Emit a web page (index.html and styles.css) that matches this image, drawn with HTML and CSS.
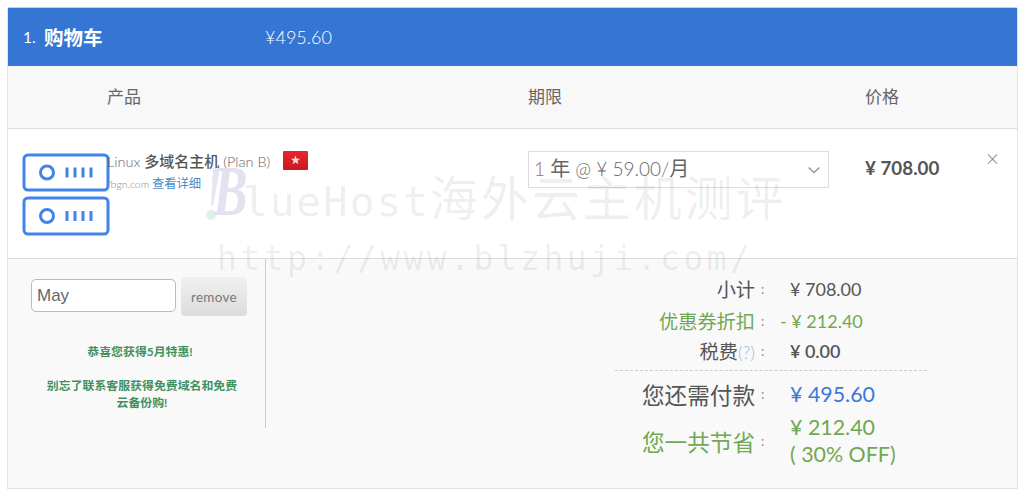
FILE: index.html
```html
<!DOCTYPE html>
<html lang="zh">
<head>
<meta charset="utf-8">
<title>购物车</title>
<link rel="stylesheet" href="styles.css">
</head>
<body>
<section class="panel">
  <header class="bar">
    <span class="step">1.</span>
    <strong class="bar-title">购物车</strong>
    <span class="bar-price">¥495.60</span>
  </header>
  <div class="cols head">
    <div class="head-product">产品</div>
    <div class="head-term">期限</div>
    <div class="head-price">价格</div>
  </div>
  <div class="cols row">
    <div class="icon-cell">
      <svg class="server" width="88" height="83" viewBox="0 0 88 83" fill="none" stroke="#4285e8" stroke-width="3">
        <rect x="2" y="2" width="84" height="35" rx="4"/>
        <circle cx="25" cy="19.500" r="6.500"/>
        <path d="M45 14.500v10M53 14.500v10M61 14.500v10M69 14.500v10"/>
        <rect x="2" y="45" width="84" height="36" rx="4"/>
        <circle cx="25" cy="63" r="6.500"/>
        <path d="M45 58v10M53 58v10M61 58v10M69 58v10"/>
      </svg>
    </div>
    <div class="info">
      <div class="name"><span>Linux <b>多域名主机</b> (Plan B)</span>
        <svg class="flag" width="25" height="19" viewBox="0 0 25 19"><defs><linearGradient id="flagfill" x1="0" y1="0" x2="0" y2="1"><stop offset="0" stop-color="#e8262c"/><stop offset="1" stop-color="#c9181f"/></linearGradient></defs><rect width="25" height="19" rx="1" fill="url(#flagfill)"/><path d="M12.500 4.500l1.200 3.200 3.400 0.100-2.700 2.100 1 3.300-2.900-1.900-2.900 1.900 1-3.300-2.700-2.100 3.400-0.100z" fill="#fbdcdc"/></svg>
      </div>
      <div class="domain">fbgn.com <a class="link">查看详细</a></div>
    </div>
    <div class="term">
      <div class="select"><span class="select-text"><i class="one">1</i> <em class="cjk">年</em> @ ¥ 59.00/<em class="cjk">月</em></span>
        <svg width="14" height="8" viewBox="0 0 14 8" fill="none" stroke="#999" stroke-width="1.500"><path d="M1.500 1.500L7 6.500l5.500-5"/></svg>
      </div>
    </div>
    <div class="price">¥ 708.00</div>
    <div class="remove-x">×</div>
  </div>
  <div class="summary">
    <div class="promo">
      <div class="promo-form">
        <input class="promo-input" value="May" aria-label="优惠码">
        <button class="promo-btn">remove</button>
      </div>
      <p class="promo-msg promo-first">恭喜您获得5月特惠!</p>
      <p class="promo-msg">别忘了联系客服获得免费域名和免费云备份购!</p>
    </div>
    <div class="totals">
      <div class="line l1"><span class="label">小计</span><span class="colon">:</span><span class="val">¥ 708.00</span></div>
      <div class="line l2 green"><span class="label">优惠券折扣</span><span class="colon">:</span><span class="val">- ¥ 212.40</span></div>
      <div class="line l3"><span class="label">税费<i class="help">(?)</i></span><span class="colon">:</span><span class="val">¥ 0.00</span></div>
      <div class="line l4 big"><span class="label">您还需付款</span><span class="colon">:</span><span class="val blue">¥ 495.60</span></div>
      <div class="line l5 big green"><span class="label">您一共节省</span><span class="colon">:</span><span class="val">¥ 212.40<br>( 30% OFF)</span></div>
    </div>
  </div>
  <div class="watermark" aria-hidden="true">
    <svg class="wm-mark" width="16" height="56" viewBox="0 0 16 56"><path d="M8 2h7L8 40H6z" fill="#e6e6f3"/><circle cx="6" cy="49" r="5" fill="#def2e6"/></svg>
    <span class="wm-b">B</span>
    <div class="wm-one">lueHost<span class="wm-cjk">海外云主机测评</span></div>
    <div class="wm-two">http://www.blzhuji.com/</div>
  </div>
</section>
</body>
</html>
```
FILE: styles.css
```css
* { box-sizing: border-box; }
html, body { margin: 0; background: #fff; }
body {
  height: 495px;
  overflow: hidden;
  color: #555;
  font-family: "Lato", "Noto Sans CJK SC", sans-serif;
}
.panel {
  position: relative;
  margin: 7px 6px 0 7px;
  border: 1px solid #e2e2e2;
  border-bottom: 0;
  border-top-color: #ccd;
  border-radius: 3px 3px 0 0;
}
.bar {
  display: flex;
  align-items: center;
  height: 58px;
  padding-bottom: 1px;
  background: #3575d3;
  color: #fff;
  padding-left: 15px;
}
.step { font-size: 15.500px; width: 21px; }
.bar-title { font-size: 19.500px; width: 221px; }
.bar-price { font-size: 18px; font-weight: 300; }
.cols {
  display: grid;
  grid-template-columns: 99px 421px 337px 1fr;
  background: #fff;
}
.head {
  height: 63px;
  align-items: center;
  padding-bottom: 4px;
  background: #f8f8f8;
  border-bottom: 1px solid #ddd;
  font-size: 17px;
  color: #666;
}
.head-product { grid-column: 2; }
.head-term { grid-column: 3; }
.head-price { grid-column: 4; }
.row {
  position: relative;
  height: 130px;
  border-bottom: 1px solid #ddd;
}
.icon-cell { padding: 24px 0 0 14px; }
.server { display: block; overflow: visible; }
.info { padding-top: 21px; }
.name { display: flex; align-items: center; gap: 13px; font-size: 14.500px; color: #666; font-weight: 300; }
.name b { font-weight: 500; color: #555; font-size: 15px; }
.flag { display: block; }
.domain { margin-top: 3px; font-size: 10.500px; color: #888; font-weight: 300; }
.link { color: #4a8bc9; font-size: 12.300px; font-weight: 400; }
.term { padding-top: 22px; }
.select {
  display: flex;
  align-items: center;
  justify-content: space-between;
  width: 301px;
  height: 37px;
  padding: 0 7px 0 5px;
  border: 1px solid #ddd;
  background: #fff;
  font-size: 19px;
  font-weight: 300;
  color: #666;
}
.select-text { position: relative; top: -2px; }
.one { font-style: normal; color: #a66; }
.cjk { font-style: normal; font-size: 20px; font-weight: 400; }
.price { padding-top: 27px; font-size: 18.800px; font-weight: 700; color: #555; white-space: nowrap; }
.remove-x {
  position: absolute;
  right: 18px;
  top: 15px;
  font-size: 23px;
  line-height: 28px;
  font-weight: 300;
  color: #888;
}
.summary {
  display: flex;
  height: 230px;
  background: #f9f9f9;
  border-bottom: 1px solid #e2e2e2;
}
.promo {
  flex: none;
  width: 258px;
  height: 169px;
  padding: 18px 0 0 23px;
  border-right: 1px solid #ccc;
}
.promo-form { display: flex; align-items: flex-start; gap: 5px; }
.promo-input {
  width: 145px;
  height: 33px;
  margin-top: 2px;
  padding: 0 5px;
  border: 1px solid #bbb;
  border-radius: 5px;
  background: #fff;
  color: #666;
  font: 17px "Liberation Sans", sans-serif;
}
.promo-btn {
  width: 66px;
  height: 39px;
  padding: 0;
  border: 0;
  border-radius: 4px;
  background: linear-gradient(#f0f0f0, #dcdcdc);
  color: #777;
  font: 13.500px "Lato", sans-serif;
  letter-spacing: 0.300px;
}
.promo-msg {
  margin: 0 0 0 14px;
  width: 194px;
  text-align: center;
  font-size: 11.900px;
  line-height: 17px;
  font-weight: 700;
  color: #3f9162;
}
.promo-first { margin: 27px 0 17px 12px; }
.totals {
  flex: none;
  width: 312px;
  margin-left: 349px;
  padding-top: 15px;
  color: #555;
}
.line {
  display: grid;
  grid-template-columns: 140px 35px 1fr;
  align-items: center;
  font-size: 18px;
}
.label { text-align: right; white-space: nowrap; font-size: 19.200px; }
.colon { font-size: 13px; color: #888; padding-left: 6px; }
.val { white-space: nowrap; }
.l1 { height: 30px; }
.l2 { height: 33px; }
.l2 .val { margin-left: -10px; }
.l3 { height: 27px; }
.l3 .val { font-weight: 600; }
.l4 { height: 44px; margin-top: 6px; border-top: 1px dashed #ccc; padding-top: 3px; }
.l5 .val { line-height: 27px; }
.big .label { font-size: 22.600px; }
.big .val { font-size: 21.400px; }
.green, .l5 .val, .l2 .val { color: #70a853; }
.blue { color: #3b78dc; }
.help { font-style: normal; font-size: 18px; font-weight: 300; color: #9db9e6; }
.watermark {
  position: absolute;
  left: 197px;
  top: 158px;
  pointer-events: none;
  color: rgba(0, 0, 0, 0.08);
  font-family: "DejaVu Sans Mono", "Noto Sans CJK SC", monospace;
  white-space: nowrap;
}
.wm-mark { position: absolute; left: 0; top: 0; }
.wm-b {
  position: absolute;
  left: 8px;
  top: -11px;
  font: italic bold 72px/72px "Liberation Serif", serif;
  color: #e2e2f1;
  transform: scaleX(0.72);
  transform-origin: left center;
}
.wm-one { margin-left: 38px; font-size: 41px; line-height: 50px; letter-spacing: 2px; margin-top: 8px; }
.wm-cjk { font-size: 48px; letter-spacing: 3px; }
.wm-two { margin-left: 12px; margin-top: 10px; font-size: 33px; line-height: 44px; letter-spacing: 3.450px; }
```
